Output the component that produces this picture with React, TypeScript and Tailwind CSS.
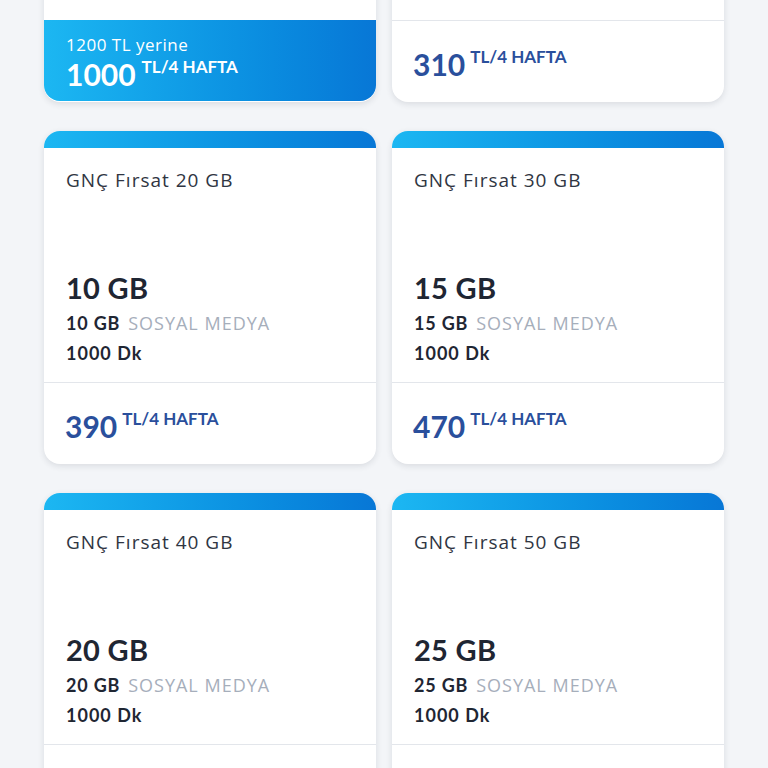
type Plan = {
  name: string
  data: string
  social: string
  minutes: string
  price: string
  oldPrice?: string
}

const plans: Plan[] = [
  { name: 'GNÇ Fırsat 15 GB', data: '8 GB', social: '7 GB', minutes: '1000 Dk', price: '1000', oldPrice: '1200' },
  { name: 'GNÇ Fırsat 10 GB', data: '5 GB', social: '5 GB', minutes: '1000 Dk', price: '310' },
  { name: 'GNÇ Fırsat 20 GB', data: '10 GB', social: '10 GB', minutes: '1000 Dk', price: '390' },
  { name: 'GNÇ Fırsat 30 GB', data: '15 GB', social: '15 GB', minutes: '1000 Dk', price: '470' },
  { name: 'GNÇ Fırsat 40 GB', data: '20 GB', social: '20 GB', minutes: '1000 Dk', price: '550' },
  { name: 'GNÇ Fırsat 50 GB', data: '25 GB', social: '25 GB', minutes: '1000 Dk', price: '630' },
]

// regular weight text in the reference is wider than Lato
const light = { fontFamily: '"Open Sans", Lato, sans-serif' }

function PlanCard({ plan }: { plan: Plan }) {
  return (
    <div className="rounded-2xl bg-white shadow-[0_2px_6px_rgba(30,40,60,0.12)] flex flex-col">
      <div className="h-[17px] rounded-t-2xl bg-gradient-to-r from-[#1cb7f2] to-[#0877d6]" />
      <div className="h-[234px] px-[22px] flex flex-col">
        <div className="pt-[21px] text-[19px] leading-[22px] tracking-[1px] text-[#2f3542]" style={light}>
          {plan.name}
        </div>
        <div className="mt-auto pb-[14px]">
          <div className="text-[29px] leading-[40px] font-bold tracking-[0.3px] text-[#1f2633]">{plan.data}</div>
          <div className="text-[18px] leading-[30px]">
            <span className="font-bold tracking-[0.8px] text-[#1f2633]">{plan.social}</span>
            <span className="ml-[8px] text-[18px] tracking-[1px] text-[#a6aebb]" style={light}>SOSYAL MEDYA</span>
          </div>
          <div className="text-[18px] leading-[30px] font-bold tracking-[1px] text-[#1f2633]">{plan.minutes}</div>
        </div>
      </div>
      {plan.oldPrice ? (
        <div className="h-[81px] rounded-b-2xl bg-gradient-to-r from-[#1cb7f2] to-[#0877d6] px-[22px] pt-[14px] text-white">
          <div className="text-[17px] leading-[22px] tracking-[0.5px]" style={light}>{plan.oldPrice} TL yerine</div>
          <div className="flex items-start gap-[6px]">
            <span className="text-[30px] leading-[36px] font-bold">{plan.price}</span>
            <span className="text-[17px] leading-[22px] font-bold">TL/4 HAFTA</span>
          </div>
        </div>
      ) : (
        <div className="h-[82px] border-t border-[#e3e6eb] px-[21px] pt-[26px] flex items-start gap-[5px] text-[#2a4f9c]">
          <span className="text-[30px] leading-[34px] font-bold">{plan.price}</span>
          <span className="text-[17px] leading-[20px] font-bold">TL/4 HAFTA</span>
        </div>
      )}
    </div>
  )
}

export default function App() {
  return (
    <div
      className="h-[768px] overflow-hidden bg-[#f3f5f8]"
      style={{ fontFamily: 'Lato, "Noto Sans", sans-serif' }}
    >
      <div className="-mt-[231px] px-[44px] grid grid-cols-2 gap-x-[16px] gap-y-[29px]">
        {plans.map((p) => (
          <PlanCard key={p.name} plan={p} />
        ))}
      </div>
    </div>
  )
}
